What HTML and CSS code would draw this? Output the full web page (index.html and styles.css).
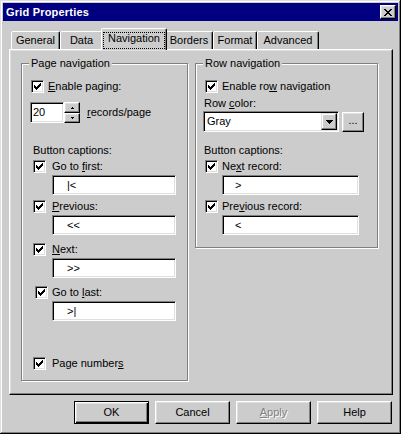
FILE: index.html
```html
<!DOCTYPE html>
<html>
<head>
<meta charset="utf-8">
<title>Grid Properties</title>
<link rel="stylesheet" href="styles.css">
</head>
<body>
<div class="window">
  <div class="titlebar">
    <span class="title">Grid Properties</span>
    <div class="close-btn">
      <svg width="8" height="7" viewBox="0 0 8 7" shape-rendering="crispEdges"><path fill="#000" d="M0 0h2v1H0z M6 0h2v1H6z M1 1h2v1H1z M5 1h2v1H5z M2 2h4v1H2z M3 3h2v1H3z M2 4h4v1H2z M1 5h2v1H1z M5 5h2v1H5z M0 6h2v1H0z M6 6h2v1H6z"/></svg>
    </div>
  </div>
  <div class="content">
    <div class="tabs">
      <div class="tab tab-general">General</div>
      <div class="tab tab-data">Data</div>
      <div class="tab tab-nav active"><span class="focus">Navigation</span></div>
      <div class="tab tab-borders">Borders</div>
      <div class="tab tab-format">Format</div>
      <div class="tab tab-adv">Advanced</div>
    </div>
    <div class="panel">
      <div class="group group-page">
        <div class="group-label">Page navigation</div>
        <div class="cb-row mt-10">
          <span class="checkbox"><svg width="7" height="7" viewBox="0 0 7 7" shape-rendering="crispEdges"><path d="M0 2h1v3H0z M1 3h1v3H1z M2 4h1v3H2z M3 3h1v3H3z M4 2h1v3H4z M5 1h1v3H5z M6 0h1v3H6z"/></svg></span>
          <span><u>E</u>nable paging:</span>
        </div>
        <div class="spin-row mt-9">
          <div class="field spin-field">20</div>
          <div class="spin-btns">
            <div class="spin-btn up"><svg width="3" height="2" viewBox="0 0 3 2" shape-rendering="crispEdges"><path d="M1 0h1v1H1z M0 1h3v1H0z"/></svg></div>
            <div class="spin-btn down"><svg width="3" height="2" viewBox="0 0 3 2" shape-rendering="crispEdges"><path d="M0 0h3v1H0z M1 1h1v1H1z"/></svg></div>
          </div>
          <span class="spin-label"><u>r</u>ecords/page</span>
        </div>
        <div class="caption-head page-head mt-21">Button captions:</div>
        <div class="cb-row sub mt-3">
          <span class="checkbox"><svg width="7" height="7" viewBox="0 0 7 7" shape-rendering="crispEdges"><path d="M0 2h1v3H0z M1 3h1v3H1z M2 4h1v3H2z M3 3h1v3H3z M4 2h1v3H4z M5 1h1v3H5z M6 0h1v3H6z"/></svg></span>
          <span>Go to <u>f</u>irst:</span>
        </div>
        <div class="field caption-field page-field mt-2">|&lt;</div>
        <div class="cb-row sub mt-5">
          <span class="checkbox"><svg width="7" height="7" viewBox="0 0 7 7" shape-rendering="crispEdges"><path d="M0 2h1v3H0z M1 3h1v3H1z M2 4h1v3H2z M3 3h1v3H3z M4 2h1v3H4z M5 1h1v3H5z M6 0h1v3H6z"/></svg></span>
          <span><u>P</u>revious:</span>
        </div>
        <div class="field caption-field page-field mt-2">&lt;&lt;</div>
        <div class="cb-row sub mt-8">
          <span class="checkbox"><svg width="7" height="7" viewBox="0 0 7 7" shape-rendering="crispEdges"><path d="M0 2h1v3H0z M1 3h1v3H1z M2 4h1v3H2z M3 3h1v3H3z M4 2h1v3H4z M5 1h1v3H5z M6 0h1v3H6z"/></svg></span>
          <span><u>N</u>ext:</span>
        </div>
        <div class="field caption-field page-field mt-2">&gt;&gt;</div>
        <div class="cb-row sub sub-last mt-8">
          <span class="checkbox"><svg width="7" height="7" viewBox="0 0 7 7" shape-rendering="crispEdges"><path d="M0 2h1v3H0z M1 3h1v3H1z M2 4h1v3H2z M3 3h1v3H3z M4 2h1v3H4z M5 1h1v3H5z M6 0h1v3H6z"/></svg></span>
          <span>Go to <u>l</u>ast:</span>
        </div>
        <div class="field caption-field page-field mt-2">&gt;|</div>
        <div class="cb-row sub mt-36">
          <span class="checkbox"><svg width="7" height="7" viewBox="0 0 7 7" shape-rendering="crispEdges"><path d="M0 2h1v3H0z M1 3h1v3H1z M2 4h1v3H2z M3 3h1v3H3z M4 2h1v3H4z M5 1h1v3H5z M6 0h1v3H6z"/></svg></span>
          <span>Page number<u>s</u></span>
        </div>
      </div>

      <div class="group group-row">
        <div class="group-label">Row navigation</div>
        <div class="cb-row mt-10">
          <span class="checkbox"><svg width="7" height="7" viewBox="0 0 7 7" shape-rendering="crispEdges"><path d="M0 2h1v3H0z M1 3h1v3H1z M2 4h1v3H2z M3 3h1v3H3z M4 2h1v3H4z M5 1h1v3H5z M6 0h1v3H6z"/></svg></span>
          <span>Enable ro<u>w</u> navigation</span>
        </div>
        <div class="row-label mt-4">Row <u>c</u>olor:</div>
        <div class="combo-row mt-1">
          <div class="combo">
            <span class="combo-text">Gray</span>
            <div class="combo-btn"><svg width="7" height="4" viewBox="0 0 7 4" shape-rendering="crispEdges"><path d="M0 0h7v1H0z M1 1h5v1H1z M2 2h3v1H2z M3 3h1v1H3z"/></svg></div>
          </div>
          <div class="dots-btn">...</div>
        </div>
        <div class="row-label mt-12">Button captions:</div>
        <div class="cb-row mt-3">
          <span class="checkbox"><svg width="7" height="7" viewBox="0 0 7 7" shape-rendering="crispEdges"><path d="M0 2h1v3H0z M1 3h1v3H1z M2 4h1v3H2z M3 3h1v3H3z M4 2h1v3H4z M5 1h1v3H5z M6 0h1v3H6z"/></svg></span>
          <span>Ne<u>x</u>t record:</span>
        </div>
        <div class="field caption-field row-field mt-2">&gt;</div>
        <div class="cb-row mt-5">
          <span class="checkbox"><svg width="7" height="7" viewBox="0 0 7 7" shape-rendering="crispEdges"><path d="M0 2h1v3H0z M1 3h1v3H1z M2 4h1v3H2z M3 3h1v3H3z M4 2h1v3H4z M5 1h1v3H5z M6 0h1v3H6z"/></svg></span>
          <span>Pre<u>v</u>ious record:</span>
        </div>
        <div class="field caption-field row-field mt-2">&lt;</div>
      </div>
    </div>
    <div class="footer">
      <div class="btn default">OK</div>
      <div class="btn">Cancel</div>
      <div class="btn disabled"><u>A</u>pply</div>
      <div class="btn">Help</div>
    </div>
  </div>
</div>
</body>
</html>
```

FILE: styles.css
```css
body {
  margin: 0;
  font-family: "Liberation Sans", Arial, sans-serif;
  font-size: 11px;
  color: #000;
  background: #cccccc;
}

.window {
  width: 401px;
  height: 434px;
  box-sizing: border-box;
  padding: 3px;
  background: #cccccc;
  box-shadow: inset -1px -1px #000, inset 1px 1px #dfdfdf, inset -2px -2px #808080, inset 2px 2px #fff;
  display: flex;
  flex-direction: column;
}

.titlebar {
  height: 18px;
  background: #000080;
  display: flex;
  align-items: center;
  justify-content: space-between;
  padding: 0 2px 0 3px;
}

.title {
  color: #fff;
  font-weight: bold;
  font-size: 11px;
  letter-spacing: 0.2px;
  line-height: 13px;
}

.close-btn {
  width: 16px;
  height: 14px;
  box-sizing: border-box;
  background: #cccccc;
  border: 1px solid;
  border-color: #fff #000 #000 #fff;
  box-shadow: inset -1px -1px #808080, inset 1px 1px #dfdfdf;
  display: flex;
  align-items: center;
  justify-content: center;
}

.content {
  flex: 1;
  display: flex;
  flex-direction: column;
  padding: 7px 5px 0 6px;
}

.tabs {
  display: flex;
  align-items: flex-end;
  height: 21px;
  padding-left: 2px;
}

.tab {
  box-sizing: border-box;
  height: 18px;
  border: 1px solid;
  border-bottom: none;
  border-color: #fff #000 transparent #fff;
  border-radius: 2px 2px 0 0;
  box-shadow: inset -1px 0 #808080;
  text-align: center;
  padding-top: 2px;
  line-height: 13px;
  background: #cccccc;
}

.tab-general { width: 49px; }
.tab-data { width: 43px; }
.tab-nav { width: 62px; }
.tab-borders { width: 48px; }
.tab-format { width: 44px; }
.tab-adv { width: 62px; }

.tab.active {
  width: 66px;
  height: 22px;
  margin: 0 -2px -1px;
  padding-top: 0;
  position: relative;
  z-index: 1;
}

.focus {
  display: block;
  box-sizing: border-box;
  margin: 3px 1px 0;
  height: 17px;
  border: 1px dotted #000;
  line-height: 11px;
}

.panel {
  box-sizing: border-box;
  width: 384px;
  height: 346px;
  border: 1px solid;
  border-color: #fff #000 #000 #fff;
  box-shadow: inset -1px -1px #808080, inset 1px 1px #dfdfdf;
  display: flex;
  align-items: flex-start;
  gap: 7px;
  padding: 13px 0 0 11px;
}

.group {
  box-sizing: border-box;
  border: 1px solid #808080;
  box-shadow: inset 1px 1px #fff, 1px 1px #fff;
  padding: 0 9px;
  display: flex;
  flex-direction: column;
  align-items: flex-start;
}

.group-page { width: 167px; height: 318px; }
.group-row { width: 183px; height: 185px; }

.group-label {
  margin-top: -7px;
  margin-left: -2px;
  padding: 0 2px;
  background: #cccccc;
  line-height: 13px;
}

.cb-row {
  display: flex;
  align-items: center;
  gap: 4px;
  height: 13px;
  line-height: 13px;
  white-space: nowrap;
}

.cb-row.sub {
  margin-left: 2px;
  gap: 6px;
}

.cb-row.sub-last {
  margin-left: 4px;
  gap: 4px;
}

.checkbox {
  flex: none;
  width: 13px;
  height: 13px;
  box-sizing: border-box;
  background: #fff;
  border: 1px solid;
  border-color: #808080 #fff #fff #808080;
  box-shadow: inset 1px 1px #000, inset -1px -1px #dfdfdf;
  display: flex;
  align-items: center;
  justify-content: center;
}

.checkbox svg { display: block; }

.field {
  box-sizing: border-box;
  height: 20px;
  background: #fff;
  border: 1px solid;
  border-color: #808080 #fff #fff #808080;
  box-shadow: inset 1px 1px #000, inset -1px -1px #dfdfdf;
  line-height: 18px;
  white-space: pre;
}

.page-field {
  width: 124px;
  margin-left: 21px;
  padding-left: 14px;
}

.row-field {
  width: 137px;
  margin-left: 17px;
  padding-left: 12px;
}

.spin-row {
  display: flex;
  align-items: center;
  margin-left: -1px;
}

.spin-field {
  width: 34px;
  height: 21px;
  padding-left: 2px;
  line-height: 19px;
}

.spin-btns {
  display: flex;
  flex-direction: column;
  width: 16px;
  height: 21px;
}

.spin-btn {
  box-sizing: border-box;
  border: 1px solid;
  border-color: #fff #000 #000 #fff;
  box-shadow: inset -1px -1px #808080, inset 1px 1px #dfdfdf;
  display: flex;
  align-items: center;
  justify-content: center;
}

.spin-btn.up { height: 11px; }
.spin-btn.down { height: 10px; }

.spin-label {
  margin-left: 7px;
  line-height: 13px;
}

.caption-head {
  line-height: 13px;
}

.page-head { margin-left: 2px; }

.row-label {
  line-height: 13px;
  margin-left: -1px;
}

.combo-row {
  display: flex;
  align-items: center;
  margin-left: -2px;
}

.combo {
  box-sizing: border-box;
  width: 136px;
  height: 21px;
  padding: 2px;
  background: #fff;
  border: 1px solid;
  border-color: #808080 #fff #fff #808080;
  box-shadow: inset 1px 1px #000, inset -1px -1px #dfdfdf;
  display: flex;
  align-items: center;
}

.combo-text {
  flex: 1;
  padding-left: 1px;
  line-height: 13px;
}

.combo-btn {
  box-sizing: border-box;
  width: 16px;
  height: 17px;
  margin-right: -1px;
  background: #cccccc;
  border: 1px solid;
  border-color: #dfdfdf #000 #000 #dfdfdf;
  box-shadow: inset -1px -1px #808080, inset 1px 1px #fff;
  display: flex;
  align-items: center;
  justify-content: center;
}

.dots-btn {
  box-sizing: border-box;
  width: 22px;
  height: 20px;
  margin-left: 3px;
  border: 1px solid;
  border-color: #fff #000 #000 #fff;
  box-shadow: inset -1px -1px #808080, inset 1px 1px #dfdfdf;
  text-align: center;
  line-height: 15px;
}

.footer {
  display: flex;
  justify-content: flex-end;
  gap: 6px;
  margin-top: 6px;
  padding-right: 1px;
}

.btn {
  box-sizing: border-box;
  width: 75px;
  height: 23px;
  border: 1px solid;
  border-color: #fff #000 #000 #fff;
  box-shadow: inset -1px -1px #808080, inset 1px 1px #dfdfdf;
  text-align: center;
  line-height: 21px;
}

.btn.default {
  border-color: #000;
  box-shadow: inset 1px 1px #fff, inset -1px -1px #000, inset -2px -2px #808080, inset 2px 2px #dfdfdf;
}

.btn.disabled {
  color: #808080;
  text-shadow: 1px 1px 0 #fff;
}

.mt-1 { margin-top: 1px; }
.mt-2 { margin-top: 2px; }
.mt-3 { margin-top: 3px; }
.mt-4 { margin-top: 4px; }
.mt-5 { margin-top: 5px; }
.mt-8 { margin-top: 8px; }
.mt-9 { margin-top: 9px; }
.mt-10 { margin-top: 10px; }
.mt-12 { margin-top: 12px; }
.mt-21 { margin-top: 21px; }
.mt-36 { margin-top: 36px; }
```
